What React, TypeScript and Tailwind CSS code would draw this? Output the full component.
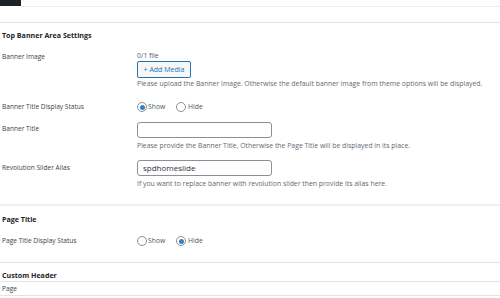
import React from "react";

const Radio = ({ checked }: { checked?: boolean }) => (
  <span className="w-[10px] h-[10px] rounded-full border border-[#8c8f94] bg-white flex items-center justify-center shrink-0">
    {checked && <span className="w-[5px] h-[5px] rounded-full bg-[#3582c4]" />}
  </span>
);

const RadioGroup = ({ show }: { show: boolean }) => (
  <div className="flex items-center h-[10px] text-[6.8px]">
    <Radio checked={show} />
    <span className="ml-[1px] w-[28px] text-[#50575e]">Show</span>
    <Radio checked={!show} />
    <span className="ml-[2px] text-[#50575e]">Hide</span>
  </div>
);

export default function App() {
  return (
    <div
      className="w-[500px] h-[298px] bg-white overflow-hidden text-[6.6px] leading-[10px] text-[#3c434a] whitespace-nowrap"
      style={{ fontFamily: '"Open Sans", "Noto Sans", sans-serif' }}
    >
      {/* top strip */}
      <div className="h-[23px] border-b border-[#e2e4e7] flex items-start">
        <div className="w-[21px] h-[6px] bg-[#1d2327]" />
        <div className="flex-1 h-[7px] border-b border-[#ececec]" />
      </div>

      {/* Top Banner Area Settings */}
      <div className="pl-[2px]">
        <div className="mt-[7px] font-bold text-[#1d2327] text-[7.1px]">Top Banner Area Settings</div>

        <div className="flex mt-[11px]">
          <div className="w-[135px] pt-[1px]">Banner Image</div>
          <div className="flex flex-col items-start">
            <div className="text-[#50575e] text-[6.8px]">0/1 file</div>
            <div className="h-[17px] w-[54px] border border-[#2271b1] rounded-[2px] bg-[#f6f7f7] text-[#2271b1] text-[7px] flex items-center justify-center">
              + Add Media
            </div>
            <div className="mt-[1px] text-[#646970] text-[6.88px]">
              Please upload the Banner Image. Otherwise the default banner image from theme options will be displayed.
            </div>
          </div>
        </div>

        <div className="flex mt-[13px]">
          <div className="w-[135px]">Banner Title Display Status</div>
          <RadioGroup show={true} />
        </div>

        <div className="flex mt-[10px]">
          <div className="w-[135px] pt-[2px]">Banner Title</div>
          <div className="flex flex-col items-start">
            <div className="h-[16px] w-[135px] border border-[#8c8f94] rounded-[3px] bg-white" />
            <div className="mt-[3px] text-[#646970] text-[6.88px]">
              Please provide the Banner Title, Otherwise the Page Title will be displayed in its place.
            </div>
          </div>
        </div>

        <div className="flex mt-[9px]">
          <div className="w-[135px] pt-[3px]">Revolution Slider Alias</div>
          <div className="flex flex-col items-start">
            <div className="h-[16px] w-[135px] border border-[#8c8f94] rounded-[3px] bg-white flex items-center px-[5px] text-[#2c3338] text-[8px]">
              spdhomeslide
            </div>
            <div className="mt-[3px] text-[#646970] text-[6.88px]">
              If you want to replace banner with revolution slider then provide its alias here.
            </div>
          </div>
        </div>
      </div>

      {/* Page Title */}
      <div className="mt-[15px] border-t-2 border-[#f0f0f1] pl-[2px]">
        <div className="mt-[8px] font-bold text-[#1d2327] text-[7.1px]">Page Title</div>
        <div className="flex mt-[12px]">
          <div className="w-[135px]">Page Title Display Status</div>
          <RadioGroup show={false} />
        </div>
      </div>

      {/* Custom Header */}
      <div className="mt-[16px] border-t border-[#e2e4e7]">
        <div className="h-[19px] pl-[2px] pt-[7px] font-bold text-[#1d2327] text-[7.1px] border-b border-[#e2e4e7]">
          Custom Header
        </div>
        <div className="h-[14px] pl-[2px] pt-[2px] border-b border-[#e2e4e7] text-[#3c434a]">Page</div>
      </div>
    </div>
  );
}
